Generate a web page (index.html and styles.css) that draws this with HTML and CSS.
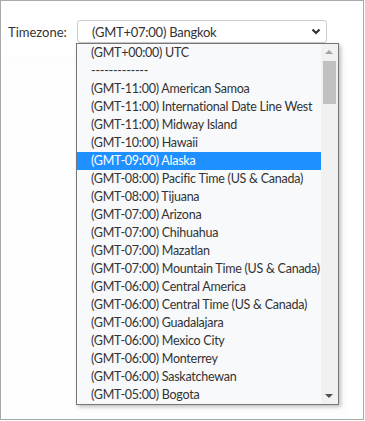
FILE: index.html
```html
<!DOCTYPE html>
<html lang="en">
<head>
    <meta charset="UTF-8">
    <meta name="viewport" content="width=device-width, initial-scale=1.0">
    <title>Timezone</title>
    <link rel="stylesheet" href="styles.css">
</head>
<body>

<div class="frame">
    <div class="backdrop"></div>
    <div class="field">
        <label class="field-label">Timezone:</label>
        <div class="select-box">
            <span>(GMT+07:00) Bangkok</span>
            <svg class="chevron" width="10" height="7" viewBox="0 0 10 7">
                <polyline points="1.5,1.5 5,5 8.5,1.5" fill="none" stroke="#333" stroke-width="2.2"/>
            </svg>
        </div>
    </div>

    <div class="dropdown">
        <ul class="options">
            <li>(GMT+00:00) UTC</li>
            <li>-------------</li>
            <li>(GMT-11:00) American Samoa</li>
            <li>(GMT-11:00) International Date Line West</li>
            <li>(GMT-11:00) Midway Island</li>
            <li>(GMT-10:00) Hawaii</li>
            <li class="selected">(GMT-09:00) Alaska</li>
            <li>(GMT-08:00) Pacific Time (US &amp; Canada)</li>
            <li>(GMT-08:00) Tijuana</li>
            <li>(GMT-07:00) Arizona</li>
            <li>(GMT-07:00) Chihuahua</li>
            <li>(GMT-07:00) Mazatlan</li>
            <li>(GMT-07:00) Mountain Time (US &amp; Canada)</li>
            <li>(GMT-06:00) Central America</li>
            <li>(GMT-06:00) Central Time (US &amp; Canada)</li>
            <li>(GMT-06:00) Guadalajara</li>
            <li>(GMT-06:00) Mexico City</li>
            <li>(GMT-06:00) Monterrey</li>
            <li>(GMT-06:00) Saskatchewan</li>
            <li>(GMT-05:00) Bogota</li>
        </ul>
        <div class="scrollbar">
            <div class="arrow up"></div>
            <div class="thumb"></div>
            <div class="arrow down"></div>
        </div>
    </div>
</div>

</body>
</html>
```

FILE: styles.css
```css
body {
    margin: 0;
    font-family: Lato, "Open Sans", sans-serif;
    font-size: 12.5px;
    letter-spacing: -0.25px;
    color: #333;
    background-color: #fff;
}
.frame {
    position: relative;
    width: 362px;
    height: 418px;
    border: 1px solid #aaa;
    background-color: #fff;
}
.backdrop {
    position: absolute;
    left: 0;
    top: 58px;
    width: 344px;
    height: 360px;
    background-color: #fefefe;
    box-shadow: 0 0 5px rgba(0, 0, 0, 0.04);
}
.field {
    position: relative;
    display: flex;
    align-items: center;
    gap: 9px;
    padding: 19px 0 0 7px;
}
.field-label {
    width: 60px;
    font-size: 13px;
    letter-spacing: 0;
}
.select-box {
    display: flex;
    align-items: center;
    justify-content: space-between;
    box-sizing: border-box;
    width: 250px;
    height: 23px;
    padding: 0 5px 0 14px;
    border: 1px solid #ccc;
    border-radius: 3px;
    background-color: #fff;
    font-size: 13px;
}
.chevron {
    display: block;
}
.dropdown {
    position: absolute;
    left: 75px;
    top: 42px;
    display: flex;
    width: 261px;
    height: 360px;
    border: 1px solid #767676;
    background-color: #f8f9fb;
    box-shadow: 2px 2px 4px rgba(0, 0, 0, 0.25);
}
.options {
    flex: 1;
    min-width: 0;
    list-style: none;
    margin: 0;
    padding: 0;
    font-size: 12.5px;
}
.options li {
    height: 18px;
    line-height: 18px;
    padding-left: 14px;
    white-space: nowrap;
    overflow: hidden;
}
.options li.selected {
    background-color: #1e90ff;
    color: #fff;
}
.scrollbar {
    position: relative;
    flex: none;
    width: 17px;
    background-color: #f1f1f1;
}
.thumb {
    position: absolute;
    left: 2px;
    top: 17px;
    width: 13px;
    height: 43px;
    background-color: #c1c1c1;
}
.arrow {
    position: absolute;
    left: 4px;
    width: 0;
    height: 0;
    border-left: 4px solid transparent;
    border-right: 4px solid transparent;
}
.arrow.up {
    top: 6px;
    border-bottom: 4px solid #a3a3a3;
}
.arrow.down {
    bottom: 6px;
    border-top: 4px solid #505050;
}
```
